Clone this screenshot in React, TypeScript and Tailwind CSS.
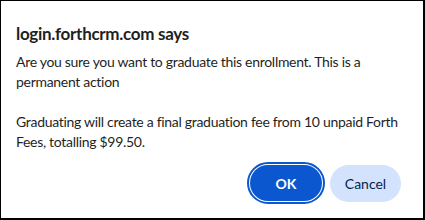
export default function App() {
  return (
    <div className="w-[425px] h-[220px] bg-white border-l border-t border-r-2 border-b-2 border-black font-['Lato',sans-serif] text-[#1f1f1f] flex flex-col">
      <div className="px-[15px] pt-[21px] whitespace-nowrap">
        <h1 className="text-[17px] font-bold leading-[24px] tracking-[-0.3px]">login.forthcrm.com says</h1>
        <p className="mt-[6px] text-[14px] leading-[20px] tracking-[-0.3px]">
          Are you sure you want to graduate this enrollment. This is a
          <br />
          permanent action
          <br />
          <br />
          Graduating will create a final graduation fee from 10 unpaid Forth
          <br />
          Fees, totalling $99.50.
        </p>
      </div>
      <div className="flex justify-end gap-[8px] pr-[22px] mt-[13px]">
        <button
          type="button"
          className="w-[72px] h-[36px] rounded-full bg-[#0b57d0] text-white text-[14px] font-bold outline-2 outline-offset-[1px] outline-[#0b57d0]"
        >
          OK
        </button>
        <button type="button" className="w-[71px] h-[37px] rounded-full bg-[#d3e3fd] text-[#041e49] text-[14px]">
          Cancel
        </button>
      </div>
    </div>
  );
}
